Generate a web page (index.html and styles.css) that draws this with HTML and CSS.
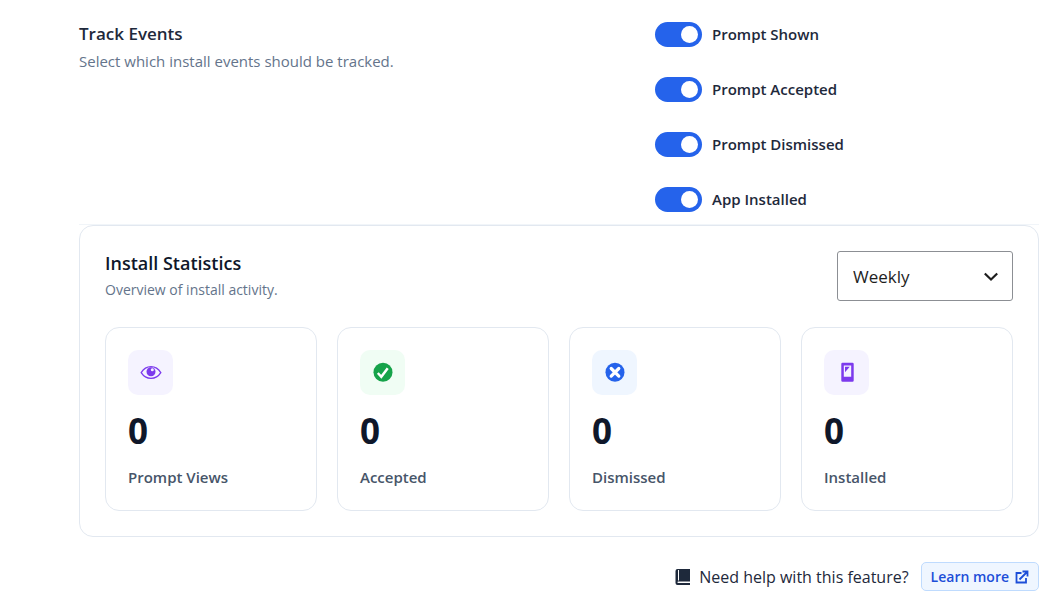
FILE: index.html
```
<!DOCTYPE html>
<html lang="en">
  <head>
    <meta charset="utf-8">
    <title>Install Events</title>
    <link rel="stylesheet" href="styles.css">
  </head>
  <body>
    <main class="page">
      <section class="setting">
        <div class="setting-info">
          <h2 class="setting-title">Track Events</h2>
          <p class="setting-text">Select which install events should be tracked.</p>
        </div>
        <div class="setting-options">
          <label class="toggle">
            <input class="toggle-input" type="checkbox" checked>
            Prompt Shown
          </label>
          <label class="toggle">
            <input class="toggle-input" type="checkbox" checked>
            Prompt Accepted
          </label>
          <label class="toggle">
            <input class="toggle-input" type="checkbox" checked>
            Prompt Dismissed
          </label>
          <label class="toggle">
            <input class="toggle-input" type="checkbox" checked>
            App Installed
          </label>
        </div>
      </section>

      <section class="stats">
        <div class="stats-header">
          <div>
            <h2 class="stats-title">Install Statistics</h2>
            <p class="stats-text">Overview of install activity.</p>
          </div>
          <div class="period">
            <select class="period-select" aria-label="Period">
              <option>Daily</option>
              <option selected>Weekly</option>
              <option>Monthly</option>
            </select>
            <svg class="period-arrow" viewBox="0 0 20 20" aria-hidden="true">
              <path d="M3.800 7.500l6.200 6 6.200-6" fill="none" stroke="currentColor" stroke-width="2.200" />
            </svg>
          </div>
        </div>

        <div class="stats-grid">
          <div class="stat">
            <div class="stat-icon stat-icon_purple">
              <svg viewBox="0 0 22 22" aria-hidden="true">
                <path d="M1.200 10.700C3.600 6.700 7 4.700 11 4.700s7.400 2 9.800 6c-2.400 3.800-5.800 5.700-9.800 5.700s-7.400-1.900-9.800-5.700z" fill="none" stroke="currentColor" stroke-width="1.300" />
                <circle cx="11" cy="9.800" r="4.500" fill="currentColor" />
                <circle cx="12.300" cy="7.700" r="1.500" fill="#f5f3ff" />
              </svg>
            </div>
            <div class="stat-value">0</div>
            <div class="stat-label">Prompt Views</div>
          </div>
          <div class="stat">
            <div class="stat-icon stat-icon_green">
              <svg viewBox="0 0 22 22" aria-hidden="true">
                <circle cx="11" cy="10.300" r="9.500" fill="currentColor" />
                <path d="M5.800 11l3.500 3.800 6.400-8.600" fill="none" stroke="#fff" stroke-width="2.500" />
              </svg>
            </div>
            <div class="stat-value">0</div>
            <div class="stat-label">Accepted</div>
          </div>
          <div class="stat">
            <div class="stat-icon stat-icon_blue">
              <svg viewBox="0 0 22 22" aria-hidden="true">
                <circle cx="11" cy="10.300" r="9.500" fill="currentColor" />
                <path d="M7.200 6.500l7.600 7.600m0-7.600l-7.600 7.600" fill="none" stroke="#fff" stroke-width="3.200" stroke-linecap="round" />
              </svg>
            </div>
            <div class="stat-value">0</div>
            <div class="stat-label">Dismissed</div>
          </div>
          <div class="stat">
            <div class="stat-icon stat-icon_purple">
              <svg viewBox="0 0 22 22" aria-hidden="true">
                <path d="M6.500 .8h10a1.200 1.200 0 0 1 1.200 1.200v16.600a1.200 1.200 0 0 1-1.200 1.200h-10a1.200 1.200 0 0 1-1.200-1.200V2a1.200 1.200 0 0 1 1.200-1.200zM7.800 3.500v11.300h7.400V3.500z" fill="currentColor" fill-rule="evenodd" />
                <path d="M9 4.700h4.800L9 10.200z" fill="currentColor" />
              </svg>
            </div>
            <div class="stat-value">0</div>
            <div class="stat-label">Installed</div>
          </div>
        </div>
      </section>

      <footer class="help">
        <svg class="help-icon" viewBox="0 0 16 18" aria-hidden="true">
          <path d="M2.500 1H15v12.500H3.200a.8.8 0 0 0 0 1.600H15V17H2.500a2 2 0 0 1-2-2V3a2 2 0 0 1 2-2z" fill="currentColor" />
          <path d="M3.500 2v10.500" stroke="#fff" stroke-width="1" />
        </svg>
        <span class="help-text">Need help with this feature?</span>
        <a class="help-link" href="#">
          Learn more
          <svg class="help-link-icon" viewBox="0 0 14 14" aria-hidden="true">
            <path d="M6.500 3H1.500v9.500H11V8M4.500 9.500l7.500-7.500M7.500 1.500h5V6.500" fill="none" stroke="currentColor" stroke-width="1.800" />
          </svg>
        </a>
      </footer>
    </main>
  </body>
</html>
```
FILE: styles.css
```
* {
  box-sizing: border-box;
}

body {
  margin: 0;
  background: #ffffff;
  font-family: "Segoe UI", "Open Sans", sans-serif;
  font-size: 15px;
  color: #1e293b;
}

h2,
p {
  margin: 0;
}

.page {
  padding: 22px 11px 11px 79px;
}

.setting {
  display: grid;
  grid-template-columns: 3fr 2fr;
  padding-bottom: 12px;
  border-bottom: 1px solid #f1f5f9;
}

.setting-title {
  font-size: 17px;
  font-weight: 600;
  line-height: 23px;
}

.setting-text {
  margin-top: 4px;
  line-height: 24px;
  color: #64748b;
}

.setting-options {
  display: flex;
  flex-direction: column;
  align-items: flex-start;
  gap: 30px;
}

.toggle {
  display: flex;
  align-items: center;
  gap: 10px;
  font-weight: 600;
  line-height: 25px;
}

.toggle-input {
  appearance: none;
  display: flex;
  justify-content: flex-start;
  width: 47px;
  height: 25px;
  margin: 0;
  padding: 4px;
  border-radius: 13px;
  background: #cbd5e1;
}

.toggle-input::before {
  content: "";
  width: 17px;
  height: 17px;
  border-radius: 50%;
  background: #ffffff;
}

.toggle-input:checked {
  justify-content: flex-end;
  background: #2563eb;
}

/*  */

.stats {
  padding: 25px;
  border: 1px solid #e2e8f0;
  border-radius: 14px;
}

.stats-header {
  display: flex;
  align-items: flex-start;
  justify-content: space-between;
}

.stats-title {
  font-size: 18px;
  font-weight: 600;
  line-height: 25px;
  color: #0f172a;
}

.stats-text {
  margin-top: 2px;
  font-size: 14px;
  line-height: 23px;
  color: #64748b;
}

.period {
  display: grid;
  align-items: center;
  width: 176px;
}

.period-select,
.period-arrow {
  grid-area: 1 / 1;
}

.period-select {
  appearance: none;
  height: 50px;
  padding: 0 40px 0 15px;
  border: 1px solid #8c8f94;
  border-radius: 3px;
  background: #ffffff;
  font-family: inherit;
  font-size: 17px;
  color: #1e1e1e;
}

.period-arrow {
  justify-self: end;
  width: 20px;
  height: 20px;
  margin-right: 12px;
  color: #1e1e1e;
  pointer-events: none;
}

.stats-grid {
  display: grid;
  grid-template-columns: repeat(4, 1fr);
  gap: 20px;
  margin-top: 26px;
}

.stat {
  padding: 22px;
  border: 1px solid #e2e8f0;
  border-radius: 14px;
}

.stat-icon {
  display: flex;
  align-items: center;
  justify-content: center;
  width: 45px;
  height: 45px;
  border-radius: 10px;
}

.stat-icon svg {
  width: 22px;
  height: 22px;
}

.stat-icon_purple {
  background: #f5f3ff;
  color: #7c3aed;
}

.stat-icon_green {
  background: #f0fdf4;
  color: #16a34a;
}

.stat-icon_blue {
  background: #eff6ff;
  color: #2563eb;
}

.stat-value {
  margin-top: 18px;
  font-size: 35px;
  font-weight: 700;
  line-height: 36px;
  color: #0f172a;
}

.stat-label {
  margin-top: 17px;
  font-weight: 600;
  line-height: 22px;
  color: #475569;
}

/*  */

.help {
  display: flex;
  align-items: center;
  justify-content: flex-end;
  margin-top: 25px;
}

.help-icon {
  width: 16px;
  height: 18px;
  margin-right: 8px;
}

.help-text {
  font-size: 16px;
}

.help-link {
  display: flex;
  align-items: center;
  gap: 6px;
  margin-left: 12px;
  padding: 0 9px;
  border: 1px solid #bfdbfe;
  border-radius: 5px;
  background: #eff6ff;
  font-size: 14px;
  font-weight: 600;
  line-height: 27px;
  color: #1d4ed8;
  text-decoration: none;
}

.help-link-icon {
  width: 14px;
  height: 14px;
}
```
